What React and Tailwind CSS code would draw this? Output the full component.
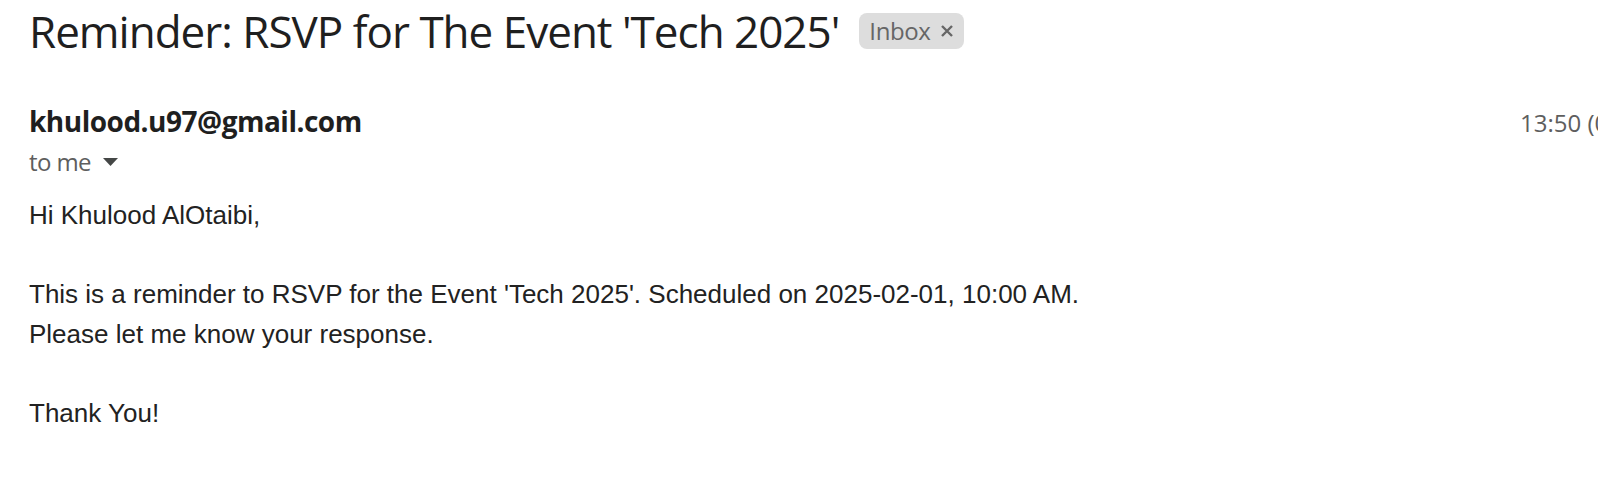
import React from "react";

export default function App() {
  return (
    <div className="w-full h-[490px] overflow-hidden bg-white">
      {/* Subject line with label chip */}
      <div className="flex items-center pl-[29px] pt-[6px] h-[56px]">
        <h1 className="text-[44px] leading-[56px] text-[#1f1f1f] font-['Open_Sans',sans-serif] tracking-[-1px]">
          Reminder: RSVP for The Event 'Tech 2025'
        </h1>
        <span className="ml-[20px] flex items-center h-[36px] px-[10px] rounded-[8px] bg-[#dddddd] text-[#666666] text-[24px] font-['Open_Sans',sans-serif] tracking-[-0.4px]">
          Inbox
          <svg className="ml-[10px] w-[14px] h-[14px]" viewBox="0 0 14 14">
            <path d="M2 2L12 12M12 2L2 12" stroke="#666666" strokeWidth="2.4" />
          </svg>
        </span>
      </div>

      {/* Sender row */}
      <div className="grid grid-cols-[1491px_auto] pl-[29px] mt-[47px] whitespace-nowrap">
        <div className="flex flex-col">
          <span className="text-[28px] leading-[36px] font-bold text-[#1f1f1f] font-['Open_Sans',sans-serif] tracking-[-0.5px]">
            khulood.u97@gmail.com
          </span>
          <span className="flex items-center mt-[5px] text-[24px] leading-[36px] text-[#5e5e5e] font-['Open_Sans',sans-serif] tracking-[-0.6px]">
            to me
            <svg className="ml-[12px] w-[15px] h-[8px]" viewBox="0 0 15 8">
              <path d="M0 0H15L7.5 8Z" fill="#444746" />
            </svg>
          </span>
        </div>
        <span className="text-[24px] leading-[36px] text-[#5e5e5e] font-['Open_Sans',sans-serif] pt-[2px]">
          13:50 (0 minutes ago)
        </span>
      </div>

      {/* Message body */}
      <div className="pl-[29px] pt-[16px] text-[26px] leading-[39.5px] text-[#222222] font-['Liberation_Sans',Arial,sans-serif]">
        <p>Hi Khulood AlOtaibi,</p>
        <p className="h-[39.5px]"></p>
        <p>This is a reminder to RSVP for the Event 'Tech 2025'. Scheduled on 2025-02-01, 10:00 AM.</p>
        <p>Please let me know your response.</p>
        <p className="h-[39.5px]"></p>
        <p>Thank You!</p>
      </div>
    </div>
  );
}
